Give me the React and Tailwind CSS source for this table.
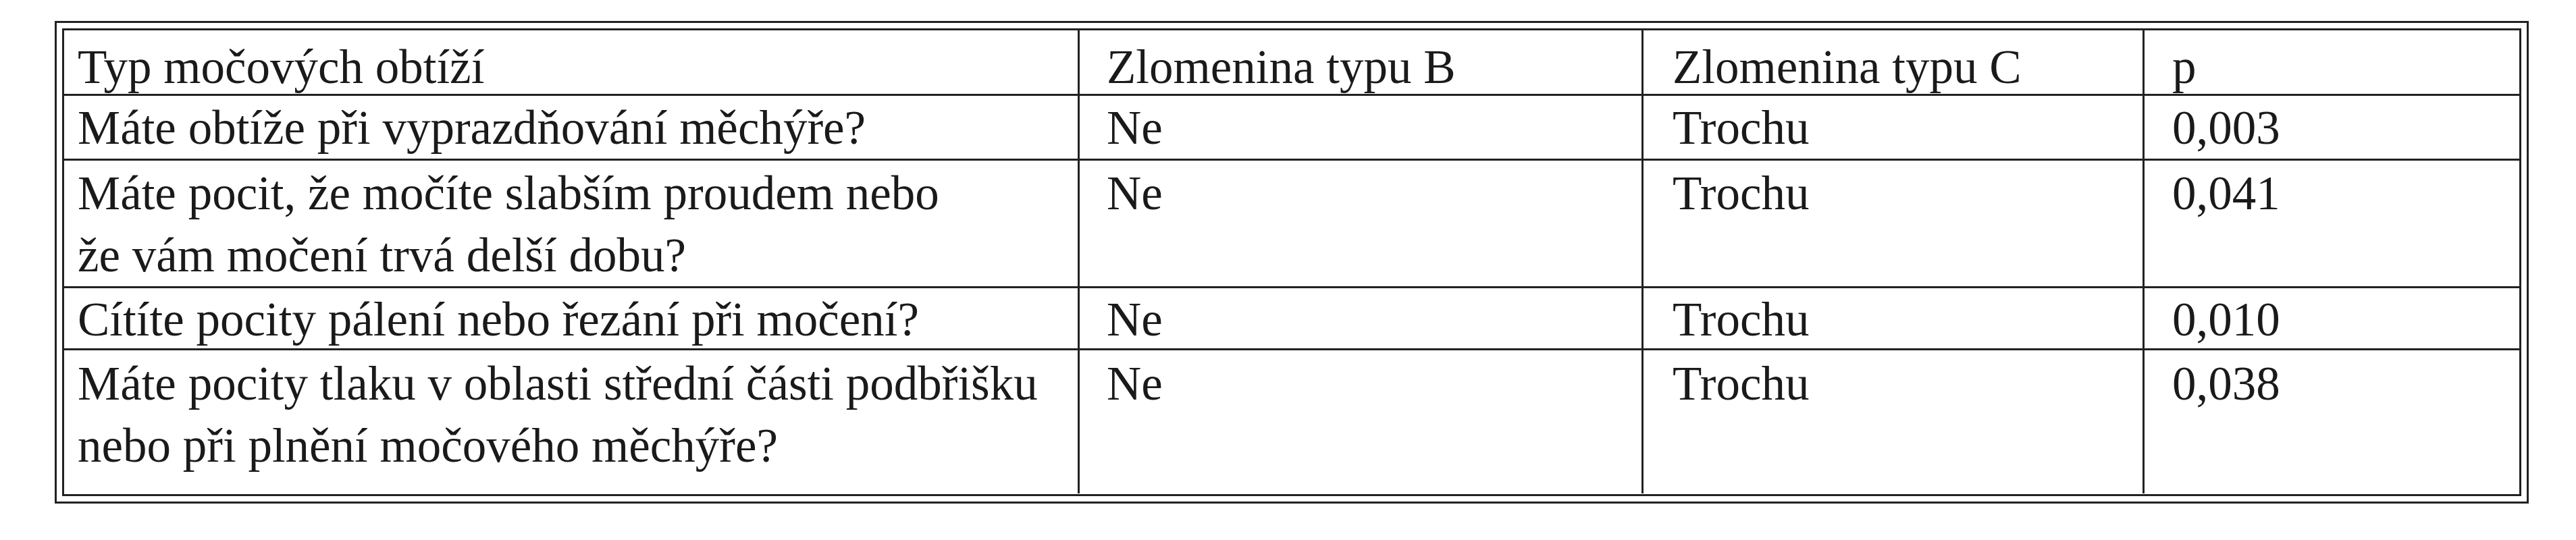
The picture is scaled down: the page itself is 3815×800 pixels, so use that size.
const rows = [
  {
    cells: ['Typ močových obtíží', 'Zlomenina typu B', 'Zlomenina typu C', 'p'],
    h: 'h-[97px]',
    pt: 'pt-[8px]',
  },
  {
    cells: ['Máte obtíže při vyprazdňování měchýře?', 'Ne', 'Trochu', '0,003'],
    h: 'h-[96px]',
    pt: 'pt-[1px]',
  },
  {
    cells: [['Máte pocit, že močíte slabším proudem nebo', 'že vám močení trvá delší dobu?'], 'Ne', 'Trochu', '0,041'],
    h: 'h-[189px]',
    pt: 'pt-[2px]',
  },
  {
    cells: ['Cítíte pocity pálení nebo řezání při močení?', 'Ne', 'Trochu', '0,010'],
    h: 'h-[92px]',
    pt: 'pt-0',
  },
  {
    cells: [['Máte pocity tlaku v oblasti střední části podbřišku', 'nebo při plnění močového měchýře?'], 'Ne', 'Trochu', '0,038'],
    h: 'h-[212px]',
    pt: 'pt-[3px]',
  },
]

const cols = [
  'w-[1504px] pl-[20px] border-r-[3px]',
  'w-[835px] pl-[40px] border-r-[3px]',
  'w-[742px] pl-[43px] border-r-[3px]',
  'w-[555px] pl-[41px]',
]

const App = () => {
  return (
    <div className="w-[3815px] h-[800px] bg-white pt-[31px] pl-[81px]"
         style={{fontFamily: '"Liberation Serif", "Times New Roman", serif'}}>
      <div className="w-[3664px] h-[715px] border-[3px] border-[#222] p-[8px]">
        <div className="h-full border-[3px] border-[#222] flex flex-col text-[71px] leading-[92px] text-[#1a1a1a]">
          {rows.map((row, i) => (
            <div key={i}
                 className={`flex ${row.h} ${i < rows.length - 1 ? 'border-b-[3px] border-[#222]' : ''}`}>
              {row.cells.map((cell, j) => (
                <div key={j} className={`${cols[j]} ${row.pt} border-[#222] whitespace-nowrap`}>
                  {Array.isArray(cell) ? cell.map((line, k) => <div key={k}>{line}</div>) : cell}
                </div>
              ))}
            </div>
          ))}
        </div>
      </div>
    </div>
  );
};

export default App;
